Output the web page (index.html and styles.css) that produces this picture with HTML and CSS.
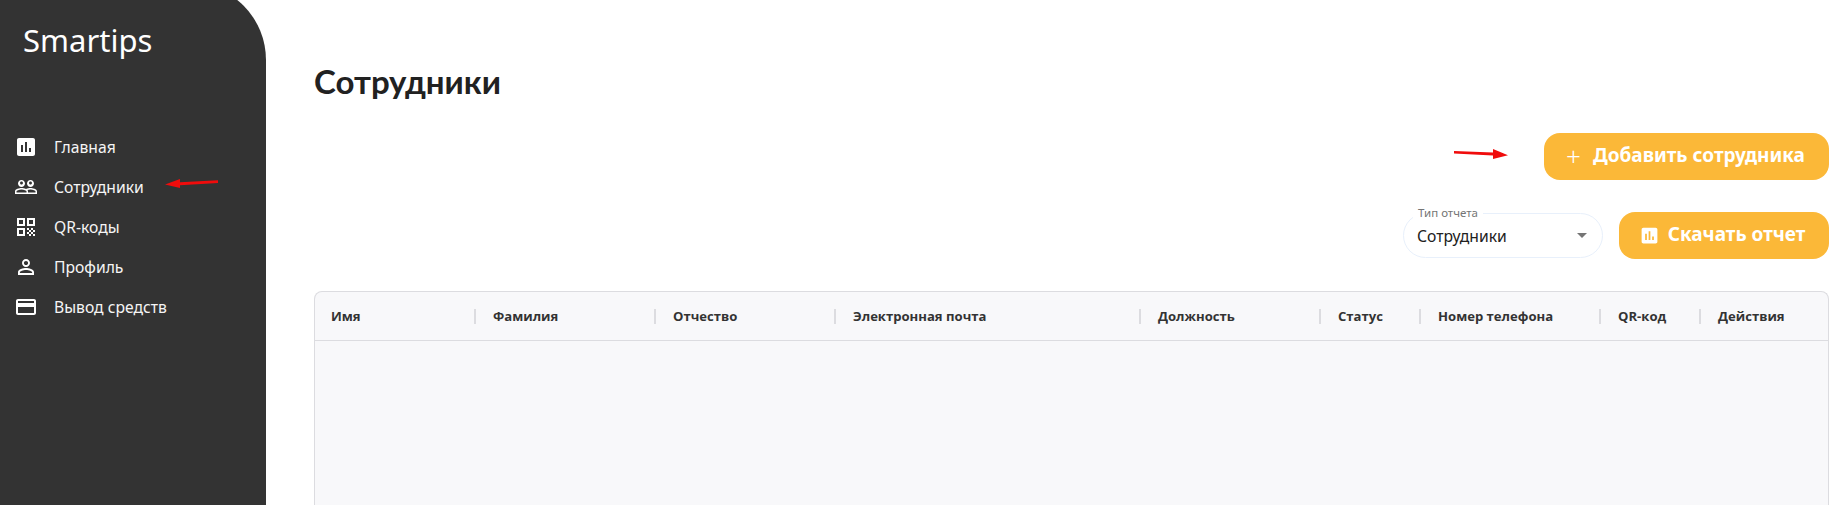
FILE: index.html
```html
<!DOCTYPE html>
<html lang="ru">
<head>
<meta charset="utf-8">
<title>Smartips</title>
<link rel="stylesheet" href="styles.css">
</head>
<body>
<div class="app">
  <aside class="sidebar">
    <div class="logo">Smartips</div>
    <nav class="nav">
      <a class="nav-item"><svg class="nav-icon" viewBox="0 0 24 24"><path d="M19 3H5c-1.1 0-2 .9-2 2v14c0 1.1.9 2 2 2h14c1.1 0 2-.9 2-2V5c0-1.1-.9-2-2-2zM9 17H7v-7h2v7zm4 0h-2V7h2v10zm4 0h-2v-4h2v4z"/></svg><span>Главная</span></a>
      <a class="nav-item"><svg class="nav-icon" viewBox="0 0 24 24"><path d="M16.5 13c-1.2 0-3.07.34-4.5 1-1.43-.67-3.3-1-4.5-1C5.33 13 1 14.08 1 16.25V19h22v-2.75c0-2.17-4.33-3.25-6.5-3.25zm-4 4.5h-10v-1.25c0-.54 2.56-1.75 5-1.75s5 1.21 5 1.75v1.25zm9 0H14v-1.25c0-.46-.2-.86-.52-1.22.88-.3 1.96-.53 3.02-.53 2.44 0 5 1.21 5 1.75v1.25zM7.5 12c1.93 0 3.5-1.57 3.5-3.5S9.43 5 7.5 5 4 6.57 4 8.5 5.57 12 7.5 12zm0-5.5c.83 0 1.5.67 1.5 1.5s-.67 1.5-1.5 1.5S6 8.83 6 8s.67-1.5 1.5-1.5zm9 5.5c1.93 0 3.5-1.57 3.5-3.5S18.43 5 16.5 5 13 6.57 13 8.5s1.57 3.5 3.5 3.5zm0-5.5c.83 0 1.5.67 1.5 1.5s-.67 1.5-1.5 1.5S15 8.83 15 8s.67-1.5 1.5-1.5z"/></svg><span>Сотрудники</span></a>
      <a class="nav-item"><svg class="nav-icon" viewBox="0 0 24 24"><path d="M3 11h8V3H3v8zm2-6h4v4H5V5zM3 21h8v-8H3v8zm2-6h4v4H5v-4zM13 3v8h8V3h-8zm6 6h-4V5h4v4zM19 19h2v2h-2zM13 13h2v2h-2zM15 15h2v2h-2zM13 17h2v2h-2zM15 19h2v2h-2zM17 17h2v2h-2zM17 13h2v2h-2zM19 15h2v2h-2z"/></svg><span>QR-коды</span></a>
      <a class="nav-item"><svg class="nav-icon" viewBox="0 0 24 24"><path d="M12 5.9c1.16 0 2.1.94 2.1 2.1s-.94 2.1-2.1 2.1S9.9 9.16 9.9 8s.94-2.1 2.1-2.1m0 9c2.97 0 6.1 1.46 6.1 2.1v1.1H5.9V17c0-.64 3.13-2.1 6.1-2.1M12 4C9.79 4 8 5.79 8 8s1.79 4 4 4 4-1.79 4-4-1.79-4-4-4zm0 9c-2.67 0-8 1.34-8 4v3h16v-3c0-2.66-5.33-4-8-4z"/></svg><span>Профиль</span></a>
      <a class="nav-item"><svg class="nav-icon" viewBox="0 0 24 24"><path d="M20 4H4c-1.11 0-1.99.89-1.99 2L2 18c0 1.11.89 2 2 2h16c1.11 0 2-.89 2-2V6c0-1.11-.89-2-2-2zm0 14H4v-6h16v6zm0-10H4V6h16v2z"/></svg><span>Вывод средств</span></a>
    </nav>
    <svg class="arrow arrow-nav" viewBox="0 0 54 10"><path d="M53 1.2 15 3.2V0L0 5.4 15 9V6.2l38-2.2z"/></svg>
  </aside>
  <main class="main">
    <h1 class="title">Сотрудники</h1>
    <div class="actions">
      <button class="btn btn-add"><span class="plus">+</span>Добавить сотрудника</button>
    </div>
    <div class="actions actions-report">
      <div class="select">
        <span class="select-label">Тип отчета</span>
        <span class="select-value">Сотрудники</span>
        <span class="caret"></span>
      </div>
      <button class="btn btn-report"><svg class="btn-icon" viewBox="0 0 24 24"><path d="M19 3H5c-1.1 0-2 .9-2 2v14c0 1.1.9 2 2 2h14c1.1 0 2-.9 2-2V5c0-1.1-.9-2-2-2zM9 17H7v-7h2v7zm4 0h-2V7h2v10zm4 0h-2v-4h2v4z"/></svg>Скачать отчет</button>
    </div>
    <section class="table">
      <div class="thead">
        <div class="th"><span>Имя</span><i class="sep"></i></div>
        <div class="th"><span>Фамилия</span><i class="sep"></i></div>
        <div class="th"><span>Отчество</span><i class="sep"></i></div>
        <div class="th"><span>Электронная почта</span><i class="sep"></i></div>
        <div class="th"><span>Должность</span><i class="sep"></i></div>
        <div class="th"><span>Статус</span><i class="sep"></i></div>
        <div class="th"><span>Номер телефона</span><i class="sep"></i></div>
        <div class="th"><span>QR-код</span><i class="sep"></i></div>
        <div class="th"><span>Действия</span></div>
      </div>
    </section>
    <svg class="arrow arrow-add" viewBox="0 0 56 11"><path d="M1 2 40 3.4V0l15 6.2L40 10V6.6L1 4.6z"/></svg>
  </main>
</div>
</body>
</html>
```
FILE: styles.css
```css
* { box-sizing: border-box; }
html, body { margin: 0; height: 505px; overflow: hidden; background: #fff; }
body { font-family: "Noto Sans", "Open Sans", sans-serif; color: #212121; }
.app { display: flex; height: 505px; position: relative; }

.sidebar {
  flex: 0 0 266px;
  height: 522px;
  margin-top: -17px;
  background: #333;
  border-top-right-radius: 77px;
  color: #fff;
}
.logo {
  padding: 37px 0 0 23px;
  height: 144px;
  font: 400 31px/40px "Noto Sans", sans-serif;
}
.nav { display: flex; flex-direction: column; }
.nav-item {
  display: flex;
  align-items: center;
  gap: 16px;
  height: 40px;
  padding-left: 14px;
  font-size: 15.7px;
  color: #f5f5f5;
}
.nav-icon { width: 24px; height: 24px; fill: #fff; flex: none; }

.main { flex: 1; padding: 0 11px 0 48px; display: flex; flex-direction: column; min-width: 0; }
.title { margin: 59px 0 0; font: 700 33px/44px "Lato", "Noto Sans", sans-serif; color: #212121; height: 74px; }
.actions { display: flex; justify-content: flex-end; align-items: center; gap: 16px; }
.actions-report { margin-top: 32px; margin-bottom: 32px; }

.btn {
  display: flex;
  align-items: center;
  justify-content: center;
  height: 47px;
  padding: 0 0 2px;
  border: 0;
  border-radius: 16px;
  background: #fbb838;
  color: #fff;
  font: 700 19px/1 "Noto Sans", sans-serif;
}
.btn-add { width: 285px; gap: 12px; padding-right: 2px; }
.plus { font-size: 26px; font-weight: 300; }
.btn-report { width: 210px; gap: 8px; padding-right: 4px; }
.btn-icon { width: 21px; height: 21px; fill: #fff; margin-top: 2px; }

.select {
  position: relative;
  display: flex;
  align-items: center;
  justify-content: space-between;
  width: 200px;
  height: 45px;
  padding: 0 15px 0 13px;
  border: 1px solid #e8f0fb;
  border-radius: 23px;
  font-size: 15.7px;
  color: #212121;
}
.select-label {
  position: absolute;
  left: 9px;
  top: -9px;
  padding: 0 5px;
  background: #fff;
  font-size: 11.5px;
  line-height: 16px;
  color: #757575;
}
.caret { width: 0; height: 0; border: 5px solid transparent; border-top-color: #757575; border-bottom: 0; }

.table {
  flex: 1;
  background: #f8f8fa;
  border: 1px solid #dcdce0;
  border-bottom: 0;
  border-radius: 8px 8px 0 0;
}
.thead {
  display: grid;
  grid-template-columns: 161px 180px 180px 305px 180px 100px 180px 100px 1fr;
  height: 49px;
  border-bottom: 1px solid #dcdce0;
}
.th {
  display: flex;
  align-items: center;
  justify-content: space-between;
  padding-left: 17px;
  font: 700 13.1px "Open Sans", "Noto Sans", sans-serif;
  color: #333;
  white-space: nowrap;
}
.th:first-child { padding-left: 16px; }
.sep { width: 2px; height: 15px; background: #dcdce0; flex: none; }

.arrow { position: absolute; fill: #f00c0c; }
.arrow-nav { left: 165px; top: 179px; width: 54px; height: 10px; }
.arrow-add { left: 1453px; top: 149px; width: 56px; height: 11px; }
```
